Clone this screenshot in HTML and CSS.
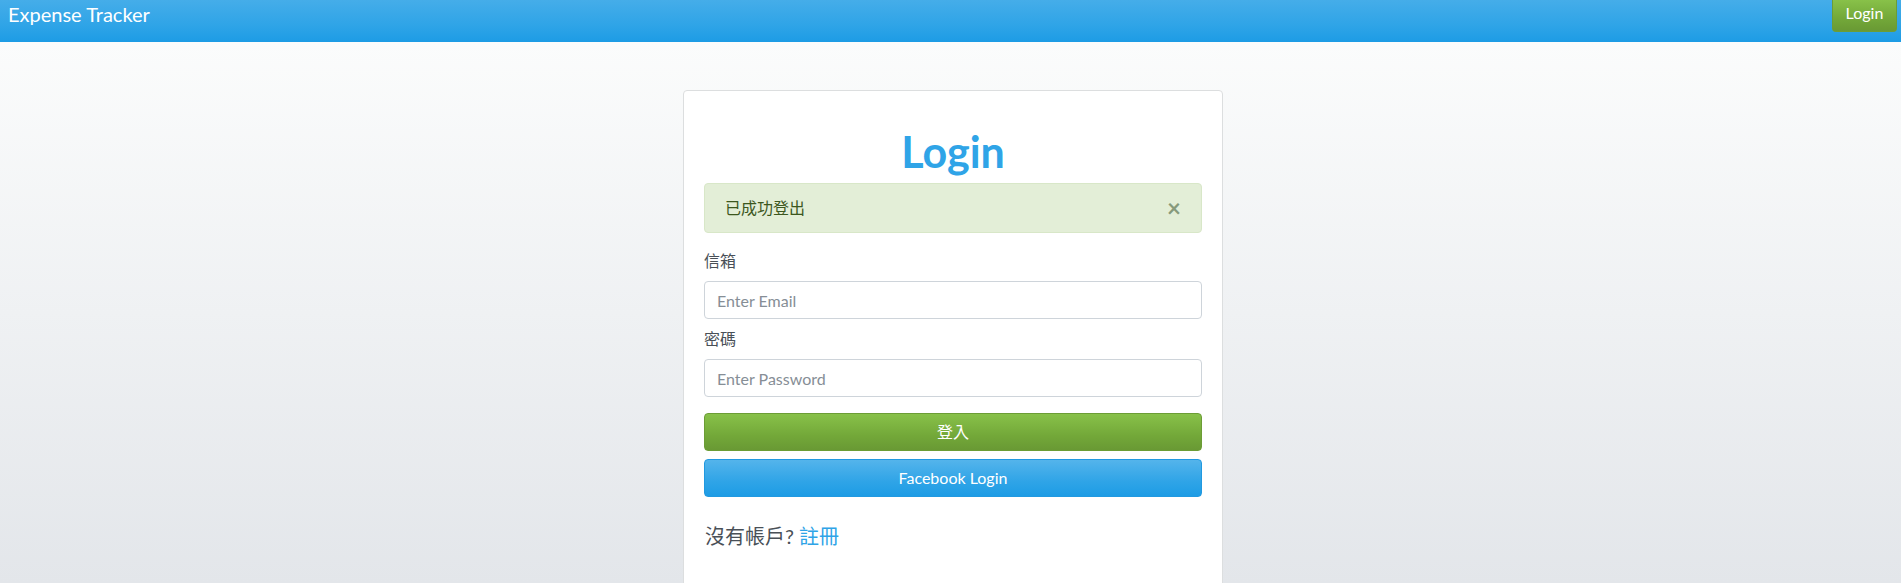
FILE: index.html
```html
<!DOCTYPE html>
<html lang="zh-Hant">
<head>
<meta charset="utf-8">
<title>Expense Tracker</title>
<link rel="stylesheet" href="styles.css">
</head>
<body>
<nav class="navbar">
  <a class="brand" href="#">Expense Tracker</a>
  <a class="nav-login" href="#">Login</a>
</nav>
<main class="page">
  <section class="card">
    <h1 class="title">Login</h1>
    <div class="alert">
      <span>已成功登出</span>
      <button class="close" type="button" aria-label="Close">&times;</button>
    </div>
    <form class="form">
      <div class="group">
        <label class="label" for="email">信箱</label>
        <input class="input" id="email" type="email" placeholder="Enter Email">
      </div>
      <div class="group">
        <label class="label" for="password">密碼</label>
        <input class="input" id="password" type="password" placeholder="Enter Password">
      </div>
      <button class="btn btn-success" type="submit">登入</button>
      <button class="btn btn-primary" type="button">Facebook Login</button>
    </form>
    <p class="signup">沒有帳戶? <a class="link" href="#">註冊</a></p>
  </section>
</main>
</body>
</html>
```

FILE: styles.css
```css
* { box-sizing: border-box; }

html, body {
  margin: 0;
  padding: 0;
}

body {
  font-family: Lato, "Noto Sans CJK TC", sans-serif;
  font-size: 16px;
  line-height: 1.5;
  color: #495057;
  background: #fff;
  overflow: hidden;
}

.navbar {
  height: 42px;
  display: flex;
  justify-content: space-between;
  align-items: flex-start;
  padding: 0 4px 0 8px;
  background-image: linear-gradient(#45ade9, #2fa4e7 60%, #1d9ce5);
}

.brand {
  color: #fff;
  font-size: 20px;
  line-height: 30px;
  margin-top: -1px;
  text-decoration: none;
}

.nav-login {
  width: 65px;
  height: 32px;
  text-align: center;
  color: #fff;
  text-decoration: none;
  font-size: 16px;
  line-height: 24px;
  padding-top: 1px;
  border: 1px solid #6c9d36;
  border-top: 0;
  border-radius: 0 0 4px 4px;
  background-image: linear-gradient(#88c149, #73a839 60%, #699934);
}

.page {
  height: calc(100vh - 42px);
  overflow: hidden;
  padding: 48px 0 0 5px;
  background-image: linear-gradient(#fbfcfc, #e3e6ea);
}

.card {
  width: 540px;
  margin: 0 auto;
  background: #fff;
  border: 1px solid #dcdedf;
  border-radius: 4px;
  padding: 20px;
}

.title {
  margin: 17px 0 7px;
  text-align: center;
  font-size: 43px;
  line-height: 48px;
  font-weight: 700;
  color: #2fa4e7;
}

.alert {
  position: relative;
  height: 50px;
  padding: 12px 20px;
  margin-bottom: 16px;
  background: #e3eed7;
  border: 1px solid #d8e7c8;
  border-radius: 4px;
  color: #3c571e;
  line-height: 24px;
}

.close {
  position: absolute;
  top: 0;
  right: 0;
  padding: 12px 20px;
  background: transparent;
  border: 0;
  font-family: Lato, sans-serif;
  font-size: 24px;
  line-height: 24px;
  font-weight: 700;
  color: #879a7b;
  cursor: pointer;
}

.form {
  display: flex;
  flex-direction: column;
}

.group {
  display: flex;
  flex-direction: column;
  margin-bottom: 8px;
}

.label {
  line-height: 24px;
  margin-bottom: 8px;
  color: #495057;
}

.input {
  height: 38px;
  padding: 6px 12px;
  border: 1px solid #ced4da;
  border-radius: 4px;
  font-family: inherit;
  font-size: 16px;
  color: #495057;
  background: #fff;
}

.input::placeholder {
  color: #868e96;
}

.btn {
  height: 38px;
  border-radius: 4px;
  font-family: inherit;
  font-size: 16px;
  line-height: 24px;
  color: #fff;
  cursor: pointer;
}

.btn-success {
  margin-top: 8px;
  border: 1px solid #6c9d36;
  background-image: linear-gradient(#88c149, #73a839 60%, #699934);
}

.btn-primary {
  margin-top: 8px;
  border: 1px solid #2199e0;
  background-image: linear-gradient(#54b4eb, #2fa4e7 60%, #1d9ce5);
}

.signup {
  margin: 27px 0 24px 1px;
  font-size: 20px;
  line-height: 24px;
  color: #495057;
}

.link {
  color: #2fa4e7;
  text-decoration: none;
}
```
